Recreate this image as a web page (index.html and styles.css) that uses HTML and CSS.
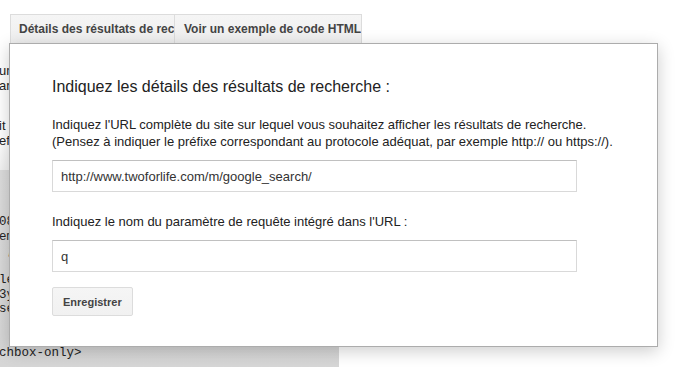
FILE: index.html
```html
<!DOCTYPE html>
<html lang="fr">
<head>
<meta charset="utf-8">
<title>Détails des résultats de recherche</title>
<link rel="stylesheet" href="styles.css">
</head>
<body>
<div class="backdrop">
  <div class="doc-top">
    <p class="doc-line first">une page de résultats</p>
    <p class="doc-line">ar défaut</p>
    <p class="doc-line gap">it intégrer</p>
    <p class="doc-line">effectuer</p>
  </div>
  <div class="code-area">
    <pre class="code">08
em
 ;

le
3y
se


chbox-only&gt;</pre>
  </div>
</div>

<div class="modal">
  <div class="tabs">
    <div class="tab tab-first"><span>Détails des résultats de recherche</span></div>
    <div class="tab">Voir un exemple de code HTML</div>
  </div>
  <div class="dialog">
    <h2 class="title">Indiquez les détails des résultats de recherche :</h2>
    <p class="desc">Indiquez l'URL complète du site sur lequel vous souhaitez afficher les résultats de recherche.<br>(Pensez à indiquer le préfixe correspondant au protocole adéquat, par exemple http:// ou https://).</p>
    <input class="field" type="text" value="http://www.twoforlife.com/m/google_search/">
    <p class="label">Indiquez le nom du paramètre de requête intégré dans l'URL :</p>
    <input class="field" type="text" value="q">
    <button class="btn" type="button">Enregistrer</button>
  </div>
</div>
</body>
</html>
```

FILE: styles.css
```css
html, body {
  margin: 0;
  padding: 0;
  background: #ffffff;
  width: 675px;
  height: 367px;
  overflow: hidden;
  font-family: Arial, "Liberation Sans", sans-serif;
}

.backdrop {
  width: 675px;
  height: 367px;
  display: flex;
  flex-direction: column;
}

.doc-top {
  height: 170px;
  box-sizing: border-box;
  padding-top: 63px;
  background: linear-gradient(#ffffff 0, #ffffff 140px, #f2f2f2 170px);
  width: 339px;
}

.doc-line {
  margin: 0;
  font-size: 13px;
  line-height: 15px;
  color: #222;
  white-space: nowrap;
  margin-left: -1px;
}

.doc-line.gap {
  margin-top: 25px;
}

.code-area {
  flex: 1;
  width: 339px;
  background: linear-gradient(#dcdcdc, #d6d6d6);
  padding-top: 45px;
  box-sizing: border-box;
}

.code {
  margin: 0;
  font-family: "Liberation Mono", "Courier New", monospace;
  font-size: 12.5px;
  line-height: 14.5px;
  color: #222;
  margin-left: -1px;
}

.modal {
  position: absolute;
  left: 9px;
  top: 14px;
  width: 649px;
}

.tabs {
  display: flex;
  padding-left: 1px;
  height: 29px;
}

.tab {
  box-sizing: border-box;
  height: 30px;
  border: 1px solid #dcdcdc;
  border-bottom: none;
  background: linear-gradient(#f5f5f5, #eeeeee);
  font-size: 12px;
  font-weight: bold;
  color: #444;
  line-height: 28px;
  padding: 0 0 0 9px;
  white-space: nowrap;
  width: 188px;
  overflow: hidden;
}

.tab-first {
  width: 164px;
  border-right: none;
  padding-left: 8px;
}

.dialog {
  background: #ffffff;
  border: 1px solid #acacac;
  box-shadow: 0 4px 16px rgba(0, 0, 0, 0.2);
  padding: 33px 42px 30px 42px;
  position: relative;
  display: flex;
  flex-direction: column;
  align-items: flex-start;
}

.title {
  margin: 0;
  font-size: 16px;
  font-weight: normal;
  line-height: 20px;
  color: #222;
}

.desc {
  margin: 19px 0 0 0;
  font-size: 13px;
  line-height: 17px;
  color: #222;
}

.field {
  margin: 10px 0 0 0;
  width: 525px;
  height: 32px;
  box-sizing: border-box;
  border: 1px solid #d9d9d9;
  border-top-color: #c0c0c0;
  padding: 0 8px;
  font-family: Arial, "Liberation Sans", sans-serif;
  font-size: 13px;
  color: #333;
  background: #fff;
  outline: none;
}

.label {
  margin: 21px 0 0 0;
  font-size: 13px;
  line-height: 17px;
  color: #222;
}

.btn {
  margin-top: 15px;
  height: 29px;
  padding: 0 10px;
  border: 1px solid #dcdcdc;
  border-radius: 2px;
  background: linear-gradient(#f5f5f5, #f1f1f1);
  font-family: Arial, "Liberation Sans", sans-serif;
  font-size: 11px;
  font-weight: bold;
  color: #444;
}
```
